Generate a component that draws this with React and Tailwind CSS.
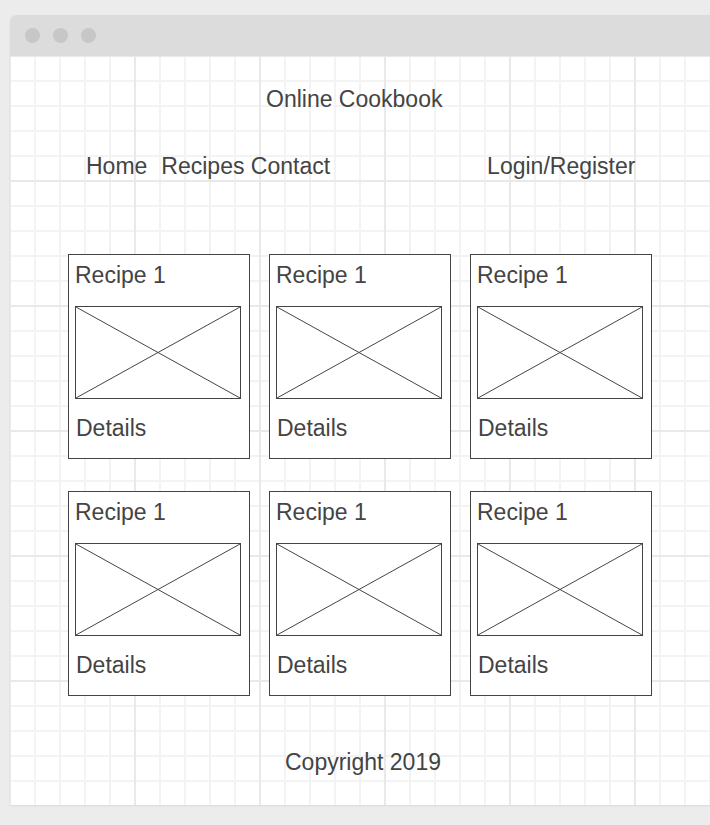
const cards = Array.from({ length: 6 });

function Placeholder() {
  return (
    <div className="ml-[6px] h-[93px] w-[166px] border border-[#444]">
      <svg width="164" height="91" viewBox="0 0 164 91" className="block">
        <line x1="0" y1="0" x2="164" y2="91" stroke="#444" strokeWidth="1" />
        <line x1="0" y1="91" x2="164" y2="0" stroke="#444" strokeWidth="1" />
      </svg>
    </div>
  );
}

function RecipeCard() {
  return (
    <div className="flex h-[205px] w-[182px] flex-col border border-[#444] bg-white pt-[7px]">
      <div className="pl-[6px] leading-[26px]">Recipe 1</div>
      <div className="mt-[18px]">
        <Placeholder />
      </div>
      <div className="mt-[16px] pl-[7px] leading-[26px]">Details</div>
    </div>
  );
}

export default function App() {
  return (
    <div className="h-[825px] w-[710px] overflow-hidden bg-[#ececec] pl-[10px] pt-[15px] font-['Liberation_Sans',Arial,sans-serif] text-[23px] text-[#444]">
      <div className="flex h-[790px] w-[720px] flex-col overflow-hidden rounded-tl-[6px] bg-white shadow-[0_1px_2px_rgba(0,0,0,0.08)]">
        {/* title bar */}
        <div className="flex h-[41px] items-center gap-[13px] bg-[#dcdcdc] pb-[1px] pl-[15px]">
          <span className="h-[15px] w-[15px] rounded-full bg-[#c7c7c7]" />
          <span className="h-[15px] w-[15px] rounded-full bg-[#c7c7c7]" />
          <span className="h-[15px] w-[15px] rounded-full bg-[#c7c7c7]" />
        </div>

        {/* page */}
        <div className="flex-1 bg-[linear-gradient(to_right,#e9e9e9_2px,transparent_2px),linear-gradient(to_bottom,#e9e9e9_2px,transparent_2px),linear-gradient(to_right,#f3f3f3_2px,transparent_2px),linear-gradient(to_bottom,#f3f3f3_2px,transparent_2px)] bg-[size:125px_125px,125px_125px,25px_25px,25px_25px] bg-[position:-1px_-1px]">
          <div className="pl-[256px] pt-[30px] leading-[26px]">Online Cookbook</div>

          <nav className="mt-[41px] flex pl-[76px] leading-[26px]">
            <span>Home</span>
            <span className="ml-[14px]">Recipes Contact</span>
            <span className="ml-[157px]">Login/Register</span>
          </nav>

          <div className="mt-[75px] grid grid-cols-[182px_182px_182px] gap-x-[19px] gap-y-[32px] pl-[58px]">
            {cards.map((_, i) => (
              <RecipeCard key={i} />
            ))}
          </div>

          <div className="mt-[53px] pl-[275px] leading-[26px]">Copyright 2019</div>
        </div>
      </div>
    </div>
  );
}
